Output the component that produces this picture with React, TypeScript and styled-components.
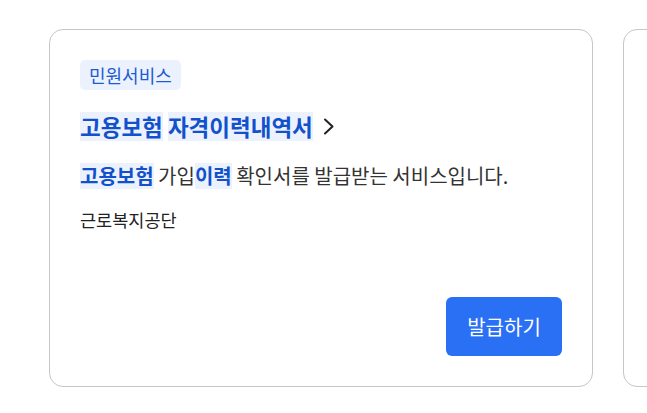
import React from "react";
import styled, { createGlobalStyle } from "styled-components";

const Global = createGlobalStyle`
  html, body { margin: 0; padding: 0; background: #ffffff; }
  body { font-family: "Noto Sans CJK KR", "Noto Sans", sans-serif; overflow: hidden; }
`;

const Row = styled.div`
  display: flex;
  gap: 30px;
  padding: 29px 0 0 49px;
  width: 647px;
  height: 413px;
  box-sizing: border-box;
  overflow: hidden;
`;

const Card = styled.div`
  flex: 0 0 544px;
  height: 358px;
  box-sizing: border-box;
  border: 1px solid #c3c6ca;
  border-radius: 14px;
  padding: 30px;
  display: flex;
  flex-direction: column;
  align-items: flex-start;
  background: #fff;
`;

const Badge = styled.span`
  display: inline-flex;
  align-items: center;
  height: 30px;
  padding: 0 9px;
  border-radius: 5px;
  background: #ebf2fe;
  color: #1d5bd3;
  font-size: 18px;
  line-height: 1;
`;

const Title = styled.a`
  margin-top: 22px;
  display: flex;
  align-items: center;
  gap: 10px;
  font-size: 22.5px;
  font-weight: 700;
  color: #1250cc;
  text-decoration: none;
  line-height: 29px;
`;

const Mark = styled.span`
  display: inline-block;
  background: #ebf2fe;
  color: #1250cc;
  font-weight: 700;
`;

const Desc = styled.p`
  margin: 22px 0 0;
  font-size: 20px;
  line-height: 26px;
  color: #333;
`;

const Org = styled.p`
  margin: 19px 0 0;
  font-size: 17.5px;
  line-height: 24px;
  color: #222;
`;

const Button = styled.button`
  margin-top: auto;
  align-self: flex-end;
  width: 116px;
  height: 59px;
  padding: 0;
  border: none;
  border-radius: 6px;
  background: #2970f5;
  color: #fff;
  font-family: inherit;
  font-size: 20px;
  cursor: pointer;
`;

const Chevron = () => (
  <svg width="12" height="17" viewBox="0 0 12 17" fill="none">
    <path d="M2 1.5 L9.5 8.5 L2 15.5" stroke="#222" strokeWidth="2" strokeLinecap="round" strokeLinejoin="round" />
  </svg>
);

export default function App() {
  return (
    <>
      <Global />
      <Row>
        <Card>
          <Badge>민원서비스</Badge>
          <Title href="#">
            <span>
              <Mark>고용보험</Mark> <Mark>자격이력내역서</Mark>
            </span>
            <Chevron />
          </Title>
          <Desc>
            <Mark>고용보험</Mark> 가입<Mark>이력</Mark> 확인서를 발급받는 서비스입니다.
          </Desc>
          <Org>근로복지공단</Org>
          <Button>발급하기</Button>
        </Card>
        <Card />
      </Row>
    </>
  );
}
